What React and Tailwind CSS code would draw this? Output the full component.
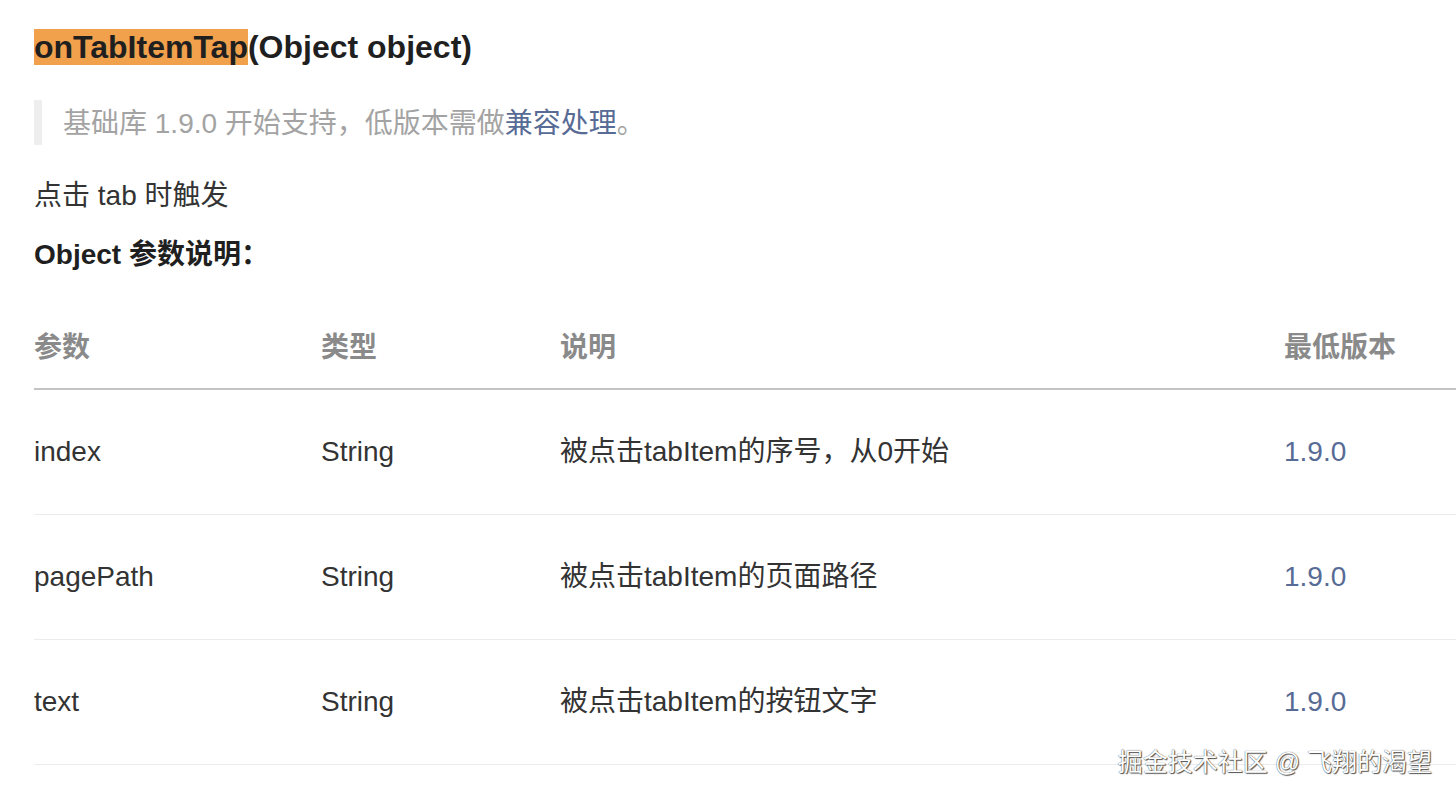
import React from 'react'

const rows = [
  { name: 'index', type: 'String', desc: '被点击tabItem的序号，从0开始', ver: '1.9.0' },
  { name: 'pagePath', type: 'String', desc: '被点击tabItem的页面路径', ver: '1.9.0' },
  { name: 'text', type: 'String', desc: '被点击tabItem的按钮文字', ver: '1.9.0' },
]

const App = () => {
  return (
    <div className="relative h-[800px] w-[1456px] overflow-hidden bg-white pl-[34px] font-['Liberation_Sans','Noto_Sans_CJK_SC',sans-serif] text-[#333]">
      {/* 标题 */}
      <h2 className="mt-[28px] text-[32px] font-bold leading-[38px] text-[#1f1f1f]">
        <span className="bg-[#f1a04c]">onTabItemTap</span>(Object object)
      </h2>

      {/* 提示 */}
      <div className="mt-[34px] border-l-[8px] border-[#eeeeee] pl-[21px] pt-[3px] text-[28px] leading-[42px] text-[#a3a3a3]">
        基础库 1.9.0 开始支持，低版本需做<span className="text-[#576b95]">兼容处理</span>。
      </div>

      <p className="mt-[31px] text-[28px] leading-[40px]">点击 tab 时触发</p>
      <p className="mt-[19px] text-[28px] font-bold leading-[40px] text-[#1f1f1f]">Object 参数说明：</p>

      {/* 参数表 */}
      <table className="mt-[33px] w-[1422px] border-collapse text-left text-[28px] leading-[40px]">
        <thead>
          <tr className="border-b-2 border-[#c4c4c4] text-[#8a8a8a]">
            <th className="w-[287px] py-[20px] font-bold">参数</th>
            <th className="w-[239px] py-[20px] font-bold">类型</th>
            <th className="w-[724px] py-[20px] font-bold">说明</th>
            <th className="py-[20px] font-bold">最低版本</th>
          </tr>
        </thead>
        <tbody>
          {rows.map((r) => (
            <tr key={r.name} className="border-b border-[#ececec]">
              <td className="py-[42px]">{r.name}</td>
              <td className="py-[42px]">{r.type}</td>
              <td className="py-[42px]">{r.desc}</td>
              <td className="py-[42px] text-[#576b95]">{r.ver}</td>
            </tr>
          ))}
        </tbody>
      </table>

      {/* 水印 */}
      <div className="absolute right-[24px] top-[745px] text-[25px] leading-[34px] text-white [text-shadow:0_0_1px_#333,1px_1px_1px_#555]">
        掘金技术社区 @ 飞翔的渴望
      </div>
    </div>
  )
}

export default App
